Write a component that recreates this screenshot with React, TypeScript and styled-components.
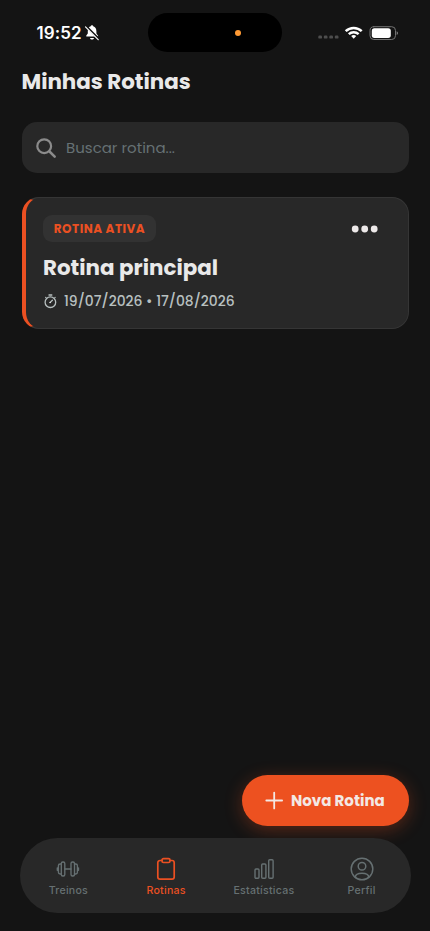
import React from 'react';
import styled, { createGlobalStyle } from 'styled-components';

const GlobalStyle = createGlobalStyle`
  * { box-sizing: border-box; }
  body { margin: 0; background: #141414; }
  button { border: 0; padding: 0; background: none; font: inherit; color: inherit; }
`;

const Screen = styled.div`
  display: flex;
  flex-direction: column;
  width: 430px;
  height: 931px;
  overflow: hidden;
  background: #141414;
  color: #e9e9e9;
  font-family: Poppins, Inter, sans-serif;
  white-space: nowrap;
`;

const StatusBar = styled.header`
  display: grid;
  grid-template-columns: 148px 134px 1fr;
  align-items: center;
  height: 65px;
  flex: none;
  color: #fff;
`;

const Clock = styled.div`
  display: flex;
  align-items: center;
  gap: 2px;
  padding: 1px 0 0 36.5px;
  font: 600 17px/20px Inter, sans-serif;
  letter-spacing: 0.1px;
`;

const Island = styled.div`
  display: flex;
  align-items: center;
  justify-content: flex-end;
  height: 39px;
  padding-right: 41px;
  border-radius: 20px;
  background: #000;
`;

const RecordingDot = styled.span`
  width: 6px;
  height: 6px;
  border-radius: 50%;
  background: #ff9a34;
`;

const Signals = styled.div`
  display: flex;
  align-items: center;
  padding: 1px 0 0 36px;
`;

const Title = styled.h1`
  margin: 0 21.5px;
  height: 57px;
  padding-top: 1px;
  font-size: 21.4px;
  line-height: 32px;
  font-weight: 700;
`;

const SearchBox = styled.label`
  display: flex;
  align-items: center;
  gap: 9px;
  height: 51px;
  margin: 0 21.5px 24px;
  padding-left: 13.5px;
  border-radius: 15px;
  background: #282828;
  color: #8b8b8b;
`;

const SearchInput = styled.input`
  flex: 1;
  min-width: 0;
  padding: 0;
  border: 0;
  outline: 0;
  background: none;
  color: #e9e9e9;
  font: 400 15px/22px Poppins, Inter, sans-serif;
  &::placeholder { color: #667174; opacity: 1; }
`;

const RoutineCard = styled.article`
  display: flex;
  flex-direction: column;
  height: 132px;
  margin: 0 21.5px;
  padding: 17px 28.5px 0 17.5px;
  border: 1px solid #353535;
  border-left: 4px solid #eb5022;
  border-radius: 17px;
  background: #282828;
`;

const CardTop = styled.div`
  display: flex;
  align-items: center;
  justify-content: space-between;
  height: 27px;
`;

const Badge = styled.span`
  display: flex;
  align-items: center;
  justify-content: center;
  width: 113px;
  height: 27px;
  border-radius: 9px;
  background: #323232;
  color: #eb5022;
  font-size: 12px;
  font-weight: 700;
  letter-spacing: 0.5px;
`;

const CardTitle = styled.h2`
  margin: 10px 0 0;
  font-size: 21.4px;
  line-height: 32px;
  font-weight: 700;
`;

const Period = styled.div`
  display: flex;
  align-items: center;
  gap: 6px;
  height: 20px;
  margin-top: 7px;
  color: #b8c0c0;
  font-size: 13.9px;
  font-weight: 500;
`;

const Spacer = styled.div`
  flex: 1;
`;

const NewButton = styled.button`
  display: flex;
  align-items: center;
  gap: 7.5px;
  align-self: flex-end;
  width: 167px;
  height: 51px;
  flex: none;
  margin: 0 21.5px 12px 0;
  padding-left: 23px;
  border-radius: 26px;
  background: #ed5120;
  box-shadow: 0 4px 18px rgba(237, 81, 32, 0.32);
  color: #f3e8e4;
`;

const NewLabel = styled.span`
  font-size: 15px;
  font-weight: 700;
`;

const TabBar = styled.nav`
  position: relative;
  display: grid;
  grid-template-columns: repeat(4, 1fr);
  height: 75px;
  flex: none;
  margin: 0 19.5px 18px;
  border-radius: 38px;
  background: #282828;
`;

const Tab = styled.button<{ $active?: boolean }>`
  display: flex;
  flex-direction: column;
  align-items: center;
  gap: 2px;
  padding-top: 19px;
  color: ${(p) => (p.$active ? '#eb5022' : '#667072')};
  font: 500 10.6px/16px Inter, sans-serif;
  letter-spacing: 0.25px;
`;

const Icon = styled.svg`
  display: block;
  flex: none;
  fill: none;
  stroke: currentColor;
  stroke-linecap: round;
  stroke-linejoin: round;
`;

const BellOff = () => (
  <Icon width="16" height="18" viewBox="0 0 16 18" strokeWidth="1.2">
    <path d="M2.3 12.4V11.6L3.8 9.4V7.2C3.8 4.4 5 2.8 6.8 2.3c.2-1.4 2.2-1.4 2.4 0 2.1.6 3.2 2.4 3.2 5v2.1l1.7 2.4v.6zM6 14h4c-.4 2-3.6 2-4 0z" fill="currentColor" stroke="none" />
    <path d="M2.4 2.4l11.7 11.9" stroke="#141414" strokeWidth="2.2" />
    <path d="M1.5 2.9l12.7 12.8" />
  </Icon>
);

const StatusIcons = () => (
  <Icon width="82" height="18" viewBox="0 0 82 18" stroke="none">
    <g fill="#4d4d4d" stroke="none">
      {[0.3, 5.8, 11.3, 16.8].map((x) => <rect key={x} x={x} y="11.6" width="3.7" height="3" rx="1.2" />)}
    </g>
    <g strokeWidth="2.5" strokeLinecap="butt">
      <path d="M27.7 7.1c4.5-4.3 11.5-4.3 16 0" />
      <path d="M30.8 10.2c2.8-2.6 7-2.6 9.8 0" />
      <path d="M33.2 12c1.4-1.3 3.6-1.3 5 0l-2.5 2.7z" fill="currentColor" stroke="none" />
    </g>
    <rect x="52" y="2.7" width="25.5" height="12.8" rx="3.8" stroke="#737373" strokeWidth="1" />
    <rect x="53.8" y="4.3" width="19" height="9.6" rx="2.6" fill="currentColor" stroke="none" />
    <path d="M78.7 7.3c1.7.7 1.7 3 0 3.7z" fill="#858585" stroke="none" />
  </Icon>
);

const SearchIcon = () => (
  <Icon width="22" height="22" viewBox="0 0 22 22" strokeWidth="2.2">
    <circle cx="9.2" cy="9.2" r="6.9" />
    <path d="M14.5 14.5l5.2 5.2" strokeWidth="2.5" />
  </Icon>
);

const MoreIcon = () => (
  <Icon width="28" height="10" viewBox="0 0 28 10">
    {[4.2, 13.7, 23.2].map((x) => <circle key={x} cx={x} cy="5" r="3.4" fill="#eeeaea" stroke="none" />)}
  </Icon>
);

const TimerIcon = () => (
  <Icon width="15" height="16" viewBox="0 0 15 16" stroke="#e8e8e8" strokeWidth="1.3">
    <circle cx="7.4" cy="9.2" r="5.3" />
    <path d="M6 2h2.8M2.9 4.6l-.2-.2M11.9 4.6l.2-.2M7.2 9.4L9.4 7.2" />
    <circle cx="7.1" cy="9.5" r=".8" fill="#e8e8e8" stroke="none" />
  </Icon>
);

const PlusIcon = () => (
  <Icon width="19" height="19" viewBox="0 0 19 19" strokeWidth="1.8">
    <path d="M9.2 1.6v15.8M1.3 9.5h15.8" />
  </Icon>
);

const DumbbellIcon = () => (
  <Icon width="24" height="24" viewBox="0 0 24 24" strokeWidth="1.35">
    <rect x="5.3" y="5" width="3.5" height="14" rx="1.5" />
    <rect x="15" y="5" width="3.5" height="14" rx="1.5" />
    <path d="M8.8 12h6.2M5.3 7H4.2Q2.4 7 2.4 8.8v6.4Q2.4 17 4.2 17H5.3M18.5 7h1.2q1.7 0 1.7 1.8v6.4q0 1.8-1.7 1.8H18.5M1.3 10.8v2.4M22.5 10.8v2.4" />
  </Icon>
);

const ClipboardIcon = () => (
  <Icon width="24" height="24" viewBox="0 0 24 24" strokeWidth="1.7">
    <path d="M8 3.5H6A2.2 2.2 0 0 0 3.8 5.7v14.2A2.2 2.2 0 0 0 6 22.1h12a2.2 2.2 0 0 0 2.2-2.2V5.7A2.2 2.2 0 0 0 18 3.5h-2" />
    <rect x="8" y="1.6" width="8" height="3.9" rx="1.5" />
  </Icon>
);

const StatsIcon = () => (
  <Icon width="24" height="24" viewBox="0 0 24 24" strokeWidth="1.4">
    <rect x="3" y="12" width="4" height="9.3" rx="1" />
    <rect x="9.7" y="7" width="4.2" height="14.3" rx="1" />
    <rect x="16.7" y="2.8" width="4.4" height="18.5" rx="1" />
  </Icon>
);

const ProfileIcon = () => (
  <Icon width="24" height="24" viewBox="0 0 24 24" strokeWidth="1.45">
    <circle cx="12" cy="12" r="10.8" />
    <circle cx="12" cy="9.2" r="3.8" />
    <path d="M5.3 20.2c.3-5.3 13.1-5.3 13.4 0" />
  </Icon>
);

const tabs = [
  { label: 'Treinos', icon: <DumbbellIcon /> },
  { label: 'Rotinas', icon: <ClipboardIcon />, active: true },
  { label: 'Estatísticas', icon: <StatsIcon /> },
  { label: 'Perfil', icon: <ProfileIcon /> },
];

export default function App() {
  return (
    <Screen>
      <GlobalStyle />
      <StatusBar>
        <Clock>19:52<BellOff /></Clock>
        <Island><RecordingDot /></Island>
        <Signals><StatusIcons /></Signals>
      </StatusBar>
      <Title>Minhas Rotinas</Title>
      <SearchBox>
        <SearchIcon />
        <SearchInput placeholder="Buscar rotina..." />
      </SearchBox>
      <RoutineCard>
        <CardTop>
          <Badge>ROTINA ATIVA</Badge>
          <button aria-label="Mais opções"><MoreIcon /></button>
        </CardTop>
        <CardTitle>Rotina principal</CardTitle>
        <Period><TimerIcon />19/07/2026 • 17/08/2026</Period>
      </RoutineCard>
      <Spacer />
      <NewButton><PlusIcon /><NewLabel>Nova Rotina</NewLabel></NewButton>
      <TabBar>
        {tabs.map((t) => (
          <Tab key={t.label} $active={t.active}>{t.icon}{t.label}</Tab>
        ))}
      </TabBar>
    </Screen>
  );
}
